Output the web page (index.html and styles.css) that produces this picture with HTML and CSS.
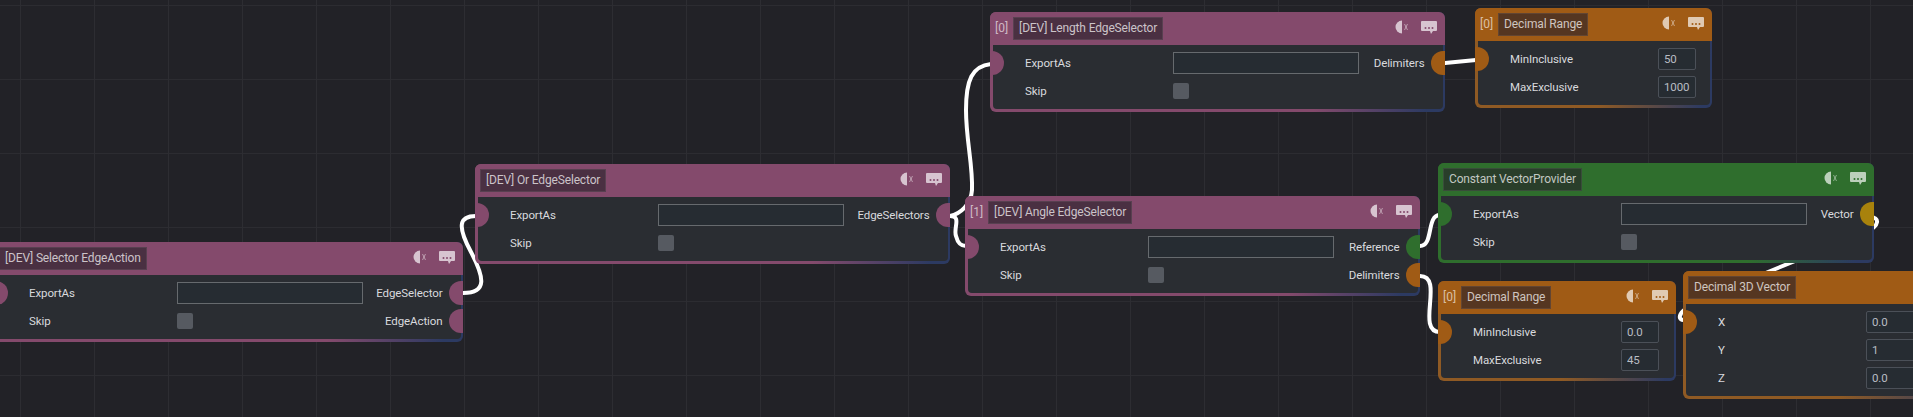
FILE: index.html
```html
<!DOCTYPE html>
<html lang="en">
<head>
    <meta charset="UTF-8">
    <title>Node Editor</title>
    <link rel="stylesheet" href="styles.css">
</head>
<body>
    <div class="canvas">
        <!-- wires sit under the nodes -->
        <svg class="wires" width="1913" height="417" viewBox="0 0 1913 417">
            <path d="M463 293 C 488 293 484 277 471 252 C 457 226 459 216 476 216"/>
            <path d="M950 216 C 960 214 971 205 972 190 C 973 165 966 140 966 110 C 966 80 972 66 991 64"/>
            <path d="M950 216 C 962 216 953 228 956 236 C 958 244 961 246 966 246"/>
            <path d="M1420 246 C 1434 246 1426 215 1440 215"/>
            <path d="M1420 276 C 1445 276 1415 332 1440 332"/>
            <path d="M1445 63 L 1476 60"/>
            <path d="M1870 217 C 1880 217 1880 226 1866 232 L 1768 272 C 1705 298 1677 308 1680 318 C 1681 320 1682 320 1686 320"/>
        </svg>

        <div class="node node-purple node-selector">
            <div class="node-header">
                <span class="node-title">[DEV] Selector EdgeAction</span>
                <span class="node-icons">
                    <svg class="icon-skip" viewBox="0 0 14 14"><path d="M7 0.5 A6.5 6.5 0 0 0 7 13.5 Z"/><path class="cross" d="M9.5 4 L12.5 10 M12.5 4 L9.5 10"/></svg>
                    <svg class="icon-comment" viewBox="0 0 16 13"><path d="M1 0 H15 Q16 0 16 1 V9 Q16 10 15 10 H12 L10 13 L9 10 H1 Q0 10 0 9 V1 Q0 0 1 0 Z"/><circle class="dot" cx="4.5" cy="7" r="1"/><circle class="dot" cx="8" cy="7" r="1"/><circle class="dot" cx="11.5" cy="7" r="1"/></svg>
                </span>
            </div>
            <div class="node-body">
                <div class="row">
                    <span class="port port-in"></span>
                    <label class="row-label">ExportAs</label>
                    <input class="text-input" type="text">
                    <span class="row-out">EdgeSelector</span>
                    <span class="port port-out"></span>
                </div>
                <div class="row">
                    <label class="row-label">Skip</label>
                    <span class="check"></span>
                    <span class="row-out">EdgeAction</span>
                    <span class="port port-out"></span>
                </div>
            </div>
        </div>

        <div class="node node-purple node-or">
            <div class="node-header">
                <span class="node-title">[DEV] Or EdgeSelector</span>
                <span class="node-icons">
                    <svg class="icon-skip" viewBox="0 0 14 14"><path d="M7 0.5 A6.5 6.5 0 0 0 7 13.5 Z"/><path class="cross" d="M9.5 4 L12.5 10 M12.5 4 L9.5 10"/></svg>
                    <svg class="icon-comment" viewBox="0 0 16 13"><path d="M1 0 H15 Q16 0 16 1 V9 Q16 10 15 10 H12 L10 13 L9 10 H1 Q0 10 0 9 V1 Q0 0 1 0 Z"/><circle class="dot" cx="4.5" cy="7" r="1"/><circle class="dot" cx="8" cy="7" r="1"/><circle class="dot" cx="11.5" cy="7" r="1"/></svg>
                </span>
            </div>
            <div class="node-body">
                <div class="row">
                    <span class="port port-in"></span>
                    <label class="row-label">ExportAs</label>
                    <input class="text-input" type="text">
                    <span class="row-out">EdgeSelectors</span>
                    <span class="port port-out"></span>
                </div>
                <div class="row">
                    <label class="row-label">Skip</label>
                    <span class="check"></span>
                </div>
            </div>
        </div>

        <div class="node node-purple node-length">
            <div class="node-header">
                <span class="node-index">[0]</span>
                <span class="node-title">[DEV] Length EdgeSelector</span>
                <span class="node-icons">
                    <svg class="icon-skip" viewBox="0 0 14 14"><path d="M7 0.5 A6.5 6.5 0 0 0 7 13.5 Z"/><path class="cross" d="M9.5 4 L12.5 10 M12.5 4 L9.5 10"/></svg>
                    <svg class="icon-comment" viewBox="0 0 16 13"><path d="M1 0 H15 Q16 0 16 1 V9 Q16 10 15 10 H12 L10 13 L9 10 H1 Q0 10 0 9 V1 Q0 0 1 0 Z"/><circle class="dot" cx="4.5" cy="7" r="1"/><circle class="dot" cx="8" cy="7" r="1"/><circle class="dot" cx="11.5" cy="7" r="1"/></svg>
                </span>
            </div>
            <div class="node-body">
                <div class="row">
                    <span class="port port-in"></span>
                    <label class="row-label">ExportAs</label>
                    <input class="text-input" type="text">
                    <span class="row-out">Delimiters</span>
                    <span class="port port-out port-orange"></span>
                </div>
                <div class="row">
                    <label class="row-label">Skip</label>
                    <span class="check"></span>
                </div>
            </div>
        </div>

        <div class="node node-purple node-angle">
            <div class="node-header">
                <span class="node-index">[1]</span>
                <span class="node-title">[DEV] Angle EdgeSelector</span>
                <span class="node-icons">
                    <svg class="icon-skip" viewBox="0 0 14 14"><path d="M7 0.5 A6.5 6.5 0 0 0 7 13.5 Z"/><path class="cross" d="M9.5 4 L12.5 10 M12.5 4 L9.5 10"/></svg>
                    <svg class="icon-comment" viewBox="0 0 16 13"><path d="M1 0 H15 Q16 0 16 1 V9 Q16 10 15 10 H12 L10 13 L9 10 H1 Q0 10 0 9 V1 Q0 0 1 0 Z"/><circle class="dot" cx="4.5" cy="7" r="1"/><circle class="dot" cx="8" cy="7" r="1"/><circle class="dot" cx="11.5" cy="7" r="1"/></svg>
                </span>
            </div>
            <div class="node-body">
                <div class="row">
                    <span class="port port-in"></span>
                    <label class="row-label">ExportAs</label>
                    <input class="text-input" type="text">
                    <span class="row-out">Reference</span>
                    <span class="port port-out port-green"></span>
                </div>
                <div class="row">
                    <label class="row-label">Skip</label>
                    <span class="check"></span>
                    <span class="row-out">Delimiters</span>
                    <span class="port port-out port-orange"></span>
                </div>
            </div>
        </div>

        <div class="node node-green node-constant">
            <div class="node-header">
                <span class="node-title">Constant VectorProvider</span>
                <span class="node-icons">
                    <svg class="icon-skip" viewBox="0 0 14 14"><path d="M7 0.5 A6.5 6.5 0 0 0 7 13.5 Z"/><path class="cross" d="M9.5 4 L12.5 10 M12.5 4 L9.5 10"/></svg>
                    <svg class="icon-comment" viewBox="0 0 16 13"><path d="M1 0 H15 Q16 0 16 1 V9 Q16 10 15 10 H12 L10 13 L9 10 H1 Q0 10 0 9 V1 Q0 0 1 0 Z"/><circle class="dot" cx="4.5" cy="7" r="1"/><circle class="dot" cx="8" cy="7" r="1"/><circle class="dot" cx="11.5" cy="7" r="1"/></svg>
                </span>
            </div>
            <div class="node-body">
                <div class="row">
                    <span class="port port-in port-green"></span>
                    <label class="row-label">ExportAs</label>
                    <input class="text-input" type="text">
                    <span class="row-out">Vector</span>
                    <span class="port port-out port-gold"></span>
                </div>
                <div class="row">
                    <label class="row-label">Skip</label>
                    <span class="check"></span>
                </div>
            </div>
        </div>

        <div class="node node-orange node-range-top">
            <div class="node-header">
                <span class="node-index">[0]</span>
                <span class="node-title">Decimal Range</span>
                <span class="node-icons">
                    <svg class="icon-skip" viewBox="0 0 14 14"><path d="M7 0.5 A6.5 6.5 0 0 0 7 13.5 Z"/><path class="cross" d="M9.5 4 L12.5 10 M12.5 4 L9.5 10"/></svg>
                    <svg class="icon-comment" viewBox="0 0 16 13"><path d="M1 0 H15 Q16 0 16 1 V9 Q16 10 15 10 H12 L10 13 L9 10 H1 Q0 10 0 9 V1 Q0 0 1 0 Z"/><circle class="dot" cx="4.5" cy="7" r="1"/><circle class="dot" cx="8" cy="7" r="1"/><circle class="dot" cx="11.5" cy="7" r="1"/></svg>
                </span>
            </div>
            <div class="node-body">
                <div class="row">
                    <span class="port port-in port-orange"></span>
                    <label class="row-label">MinInclusive</label>
                    <input class="num-input" type="text" value="50">
                </div>
                <div class="row">
                    <label class="row-label">MaxExclusive</label>
                    <input class="num-input" type="text" value="1000">
                </div>
            </div>
        </div>

        <div class="node node-orange node-range-low">
            <div class="node-header">
                <span class="node-index">[0]</span>
                <span class="node-title">Decimal Range</span>
                <span class="node-icons">
                    <svg class="icon-skip" viewBox="0 0 14 14"><path d="M7 0.5 A6.5 6.5 0 0 0 7 13.5 Z"/><path class="cross" d="M9.5 4 L12.5 10 M12.5 4 L9.5 10"/></svg>
                    <svg class="icon-comment" viewBox="0 0 16 13"><path d="M1 0 H15 Q16 0 16 1 V9 Q16 10 15 10 H12 L10 13 L9 10 H1 Q0 10 0 9 V1 Q0 0 1 0 Z"/><circle class="dot" cx="4.5" cy="7" r="1"/><circle class="dot" cx="8" cy="7" r="1"/><circle class="dot" cx="11.5" cy="7" r="1"/></svg>
                </span>
            </div>
            <div class="node-body">
                <div class="row">
                    <span class="port port-in port-orange"></span>
                    <label class="row-label">MinInclusive</label>
                    <input class="num-input" type="text" value="0.0">
                </div>
                <div class="row">
                    <label class="row-label">MaxExclusive</label>
                    <input class="num-input" type="text" value="45">
                </div>
            </div>
        </div>

        <div class="node node-orange node-vector">
            <div class="node-header">
                <span class="node-title">Decimal 3D Vector</span>
            </div>
            <div class="node-body">
                <div class="row">
                    <span class="port port-in port-orange"></span>
                    <label class="row-label">X</label>
                    <input class="num-input wide" type="text" value="0.0">
                </div>
                <div class="row">
                    <label class="row-label">Y</label>
                    <input class="num-input wide" type="text" value="1">
                </div>
                <div class="row">
                    <label class="row-label">Z</label>
                    <input class="num-input wide" type="text" value="0.0">
                </div>
            </div>
        </div>
    </div>
</body>
</html>
```

FILE: styles.css
```css
/* Canvas */
html, body {
    margin: 0;
    height: 100%;
    overflow: hidden;
}

.canvas {
    position: relative;
    width: 1913px;
    height: 417px;
    overflow: hidden;
    background-color: #222227;
    background-image:
        linear-gradient(to right, #2d2d32 1px, transparent 1px),
        linear-gradient(to bottom, #2c2c31 1px, transparent 1px);
    background-size: 74px 74px;
    background-position: 20px 5px;
    font-family: "Roboto", "Liberation Sans", sans-serif;
    font-size: 11.5px;
    letter-spacing: -0.1px;
    color: #d9dade;
}

.wires {
    position: absolute;
    top: 0;
    left: 0;
}

.wires path {
    fill: none;
    stroke: #fff;
    stroke-width: 4;
    stroke-linecap: round;
}

/* Nodes */
.node {
    position: absolute;
    box-sizing: border-box;
    padding: 0 2.5px 2.5px;
    border-radius: 6px;
}

.node-purple {
    --tint: #844a6c;
    background: linear-gradient(100deg, #844a6c 72%, #2c3a62 96%);
}

.node-orange {
    --tint: #a05b15;
    background: linear-gradient(100deg, #8f5a24 55%, #2c3a62 96%);
}

.node-green {
    --tint: #2f6e2d;
    background: linear-gradient(100deg, #2f6e2d 72%, #2c3a62 96%);
}

.node-selector { left: -6px; top: 242px; width: 469px; }
.node-or { left: 475px; top: 164px; width: 475px; }
.node-length { left: 990px; top: 12px; width: 455px; }
.node-angle { left: 965px; top: 196px; width: 455px; }
.node-constant { left: 1438px; top: 163px; width: 436px; }
.node-range-top { left: 1475px; top: 8px; width: 237px; }
.node-range-low { left: 1438px; top: 281px; width: 238px; }
.node-vector { left: 1683px; top: 271px; width: 300px; }

.node-header {
    display: flex;
    align-items: center;
    gap: 5px;
    height: 33px;
    margin: 0 -2.5px;
    padding: 0 8px 1px 5px;
    box-sizing: border-box;
    background: var(--tint);
    border-radius: 6px 6px 0 0;
}

.node-index {
    color: rgba(255, 255, 255, 0.62);
    font-size: 12px;
    letter-spacing: 0;
}

.node-title {
    padding: 0 5px;
    line-height: 21px;
    font-size: 12px;
    letter-spacing: -0.15px;
    color: rgba(255, 255, 255, 0.72);
    background: rgba(38, 32, 40, 0.62);
    border: 1px solid rgba(255, 255, 255, 0.08);
}

.node-icons {
    display: flex;
    align-items: center;
    gap: 12px;
    margin-top: -2px;
    margin-left: auto;
}

.icon-skip {
    width: 14px;
    height: 14px;
    fill: rgba(255, 255, 255, 0.68);
}

.icon-skip .cross {
    fill: none;
    stroke: rgba(255, 255, 255, 0.45);
    stroke-width: 1;
}

.icon-comment {
    width: 16px;
    height: 13px;
    fill: rgba(255, 255, 255, 0.68);
}

.icon-comment .dot {
    fill: var(--tint);
}

.node-body {
    padding: 4px 0;
    background: #2a2d32;
    border-radius: 0 0 4px 4px;
}

.row {
    position: relative;
    display: flex;
    align-items: center;
    height: 28px;
}

.row-label {
    box-sizing: border-box;
    flex: none;
    width: 180.5px;
    padding-left: 32.5px;
}

.row-out {
    margin-left: auto;
    margin-right: 18px;
}

.text-input,
.num-input {
    box-sizing: border-box;
    flex: none;
    height: 22px;
    margin: 0;
    padding: 0 5px;
    background: #262c32;
    border: 1px solid #666a6e;
    font: inherit;
    letter-spacing: inherit;
    color: #b9bdc4;
    outline: none;
}

.text-input {
    width: 186px;
}

.num-input {
    width: 38px;
    border-color: #4b5058;
    border-radius: 2px;
}

.num-input.wide {
    width: 100px;
}

.check {
    flex: none;
    width: 16px;
    height: 16px;
    background: #565a61;
    border-radius: 2px;
}

/* half round sockets over the node border */
.port {
    position: absolute;
    top: 2px;
    width: 14px;
    height: 24px;
    background: #844a6c;
}

.port-in {
    left: -2.5px;
    border-radius: 0 12px 12px 0;
}

.port-out {
    right: -2.5px;
    border-radius: 12px 0 0 12px;
}

.port-orange { background: #a05b15; }
.port-green { background: #2f6e2d; }
.port-gold { background: #a8820c; }
```
